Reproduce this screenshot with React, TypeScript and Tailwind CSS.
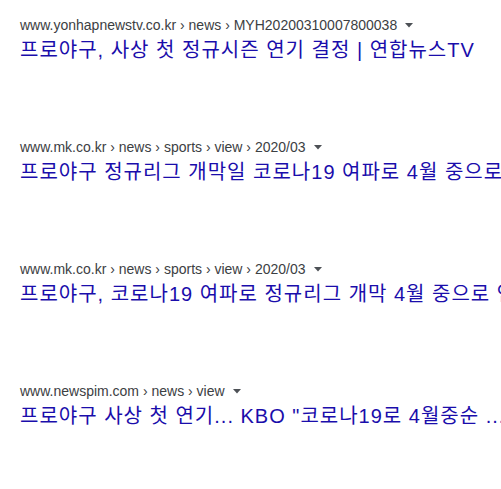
const RESULTS = [
  {
    url: 'www.yonhapnewstv.co.kr › news › MYH20200310007800038',
    title: '프로야구, 사상 첫 정규시즌 연기 결정 | 연합뉴스TV',
  },
  {
    url: 'www.mk.co.kr › news › sports › view › 2020/03',
    title: '프로야구 정규리그 개막일 코로나19 여파로 4월 중으로 연기',
  },
  {
    url: 'www.mk.co.kr › news › sports › view › 2020/03',
    title: '프로야구, 코로나19 여파로 정규리그 개막 4월 중으로 연기',
  },
  {
    url: 'www.newspim.com › news › view',
    title: '프로야구 사상 첫 연기... KBO "코로나19로 4월중순 ... 연기',
  },
];

function Caret() {
  return (
    <svg width="8" height="5" viewBox="0 0 8 5" className="ml-[8px] mt-[1px] shrink-0">
      <path d="M0 0h8L4 4.5z" fill="#4d5156" />
    </svg>
  );
}

export default function App() {
  return (
    <div className="w-[501px] h-[489px] overflow-hidden bg-white pt-[15px] pl-[20px] font-['Liberation_Sans','Noto_Sans_CJK_KR',sans-serif]">
      {RESULTS.map((r, i) => (
        <div key={i} className="mb-[72px] whitespace-nowrap">
          <div className="flex items-center text-[14px] leading-[20px] text-[#3c4043]">
            <span>{r.url}</span>
            <Caret />
          </div>
          <div className="text-[20px] leading-[30px] tracking-[1px] text-[#1a0dab]">{r.title}</div>
        </div>
      ))}
    </div>
  );
}
